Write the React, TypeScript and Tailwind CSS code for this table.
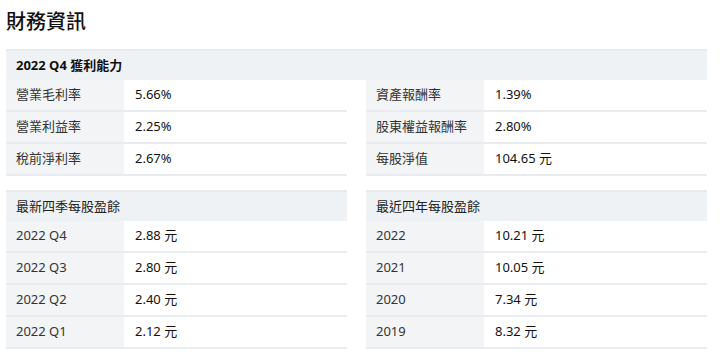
import React from 'react';

type Row = { label: string; value: string };

const profitLeft: Row[] = [
  { label: '營業毛利率', value: '5.66%' },
  { label: '營業利益率', value: '2.25%' },
  { label: '稅前淨利率', value: '2.67%' },
];

const profitRight: Row[] = [
  { label: '資產報酬率', value: '1.39%' },
  { label: '股東權益報酬率', value: '2.80%' },
  { label: '每股淨值', value: '104.65 元' },
];

const quarterEps: Row[] = [
  { label: '2022 Q4', value: '2.88 元' },
  { label: '2022 Q3', value: '2.80 元' },
  { label: '2022 Q2', value: '2.40 元' },
  { label: '2022 Q1', value: '2.12 元' },
];

const yearEps: Row[] = [
  { label: '2022', value: '10.21 元' },
  { label: '2021', value: '10.05 元' },
  { label: '2020', value: '7.34 元' },
  { label: '2019', value: '8.32 元' },
];

const Rows: React.FC<{ rows: Row[] }> = ({ rows }) => (
  <div>
    {rows.map(r => (
      <div key={r.label} className="flex h-[32px] border-b-2 border-[#e8ebef]">
        <div className="w-[118px] shrink-0 bg-[#f2f4f6] pl-[10px] flex items-center text-[#333]">{r.label}</div>
        <div className="flex-1 pl-[11px] flex items-center text-[#111]">{r.value}</div>
      </div>
    ))}
  </div>
);

const Header: React.FC<{ title: string; bold?: boolean }> = ({ title, bold }) => (
  <div className={`h-[31px] bg-[#eff2f5] border-t-2 border-[#e6e9ed] pl-[10px] flex items-center ${bold ? 'font-bold text-[#111]' : 'text-[#222]'}`}>
    {title}
  </div>
);

const App: React.FC = () => {
  return (
    <div
      className="w-[720px] h-[360px] bg-white overflow-hidden px-[6px] pt-[8px] text-[13px]"
      style={{ fontFamily: '"Noto Sans", "Noto Sans CJK TC", sans-serif' }}
    >
      <h1 className="text-[20px] leading-[28px] font-medium text-[#111] mb-[13px]">財務資訊</h1>

      <div className="w-[701px]">
        <Header title="2022 Q4 獲利能力" bold />
        <div className="grid grid-cols-2 gap-[19px]">
          <Rows rows={profitLeft} />
          <Rows rows={profitRight} />
        </div>
      </div>

      <div className="w-[701px] grid grid-cols-2 gap-[19px] mt-[14px]">
        <div>
          <Header title="最新四季每股盈餘" />
          <Rows rows={quarterEps} />
        </div>
        <div>
          <Header title="最近四年每股盈餘" />
          <Rows rows={yearEps} />
        </div>
      </div>
    </div>
  );
};

export default App;
